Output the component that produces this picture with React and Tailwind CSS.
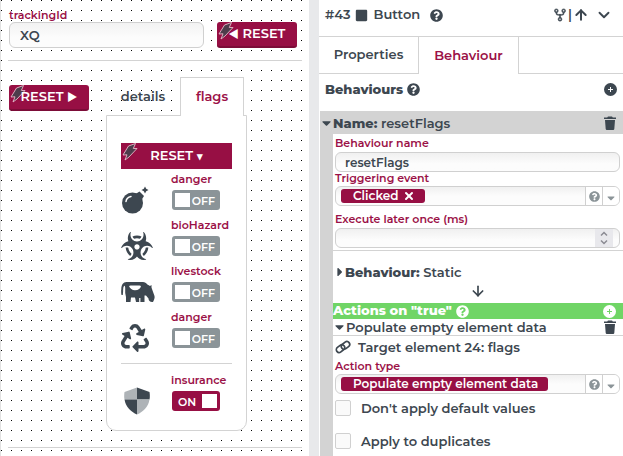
import { useState } from "react";
import {
  FaBiohazard,
  FaRecycle,
  FaCaretDown,
  FaCaretRight,
  FaQuestionCircle,
  FaSquare,
} from "react-icons/fa";
import { GoRepoForked } from "react-icons/go";
import { ChevronDown, ArrowUp, ArrowDown, X } from "lucide-react";

// ICONS
function BoltIcon() {
  return (
    <svg viewBox="0 0 18 18" className="absolute left-0 top-0 h-[18px] w-[18px]" aria-hidden="true">
      <path
        d="M7.500 3 L14.500 .5 L12.300 5.500 L16 5.500 L8 14 L4 17 L6 11.800 L2 12 Z"
        fill="#4d3c4b"
        stroke="#e7b9c9"
        strokeWidth=".9"
        strokeLinejoin="round"
      />
    </svg>
  );
}

function BombIcon() {
  return (
    <svg viewBox="0 0 28 28" className="h-7 w-7" fill="currentColor" aria-hidden="true">
      <circle cx="11.500" cy="17" r="10.500" />
      <path d="M14.500 8 L18.500 5.500 L23 10 L20.500 14 Z" />
      <path d="M24 .5 L25.200 2.800 L27.500 4 L25.200 5.200 L24 7.500 L22.800 5.200 L20.500 4 L22.800 2.800 Z" />
      <path d="M5 15.500 Q5.500 11.500 10 10.500" fill="none" stroke="#fff" strokeWidth="1.500" strokeLinecap="round" />
    </svg>
  );
}

function CowIcon() {
  return (
    <svg viewBox="0 0 34 22" className="h-[22px] w-[34px]" fill="currentColor" aria-hidden="true">
      <path
        fillRule="evenodd"
        d="M.5 14 C0 12 .2 10 .3 8 C.4 4 2 1 5.500 1 H22 C24 1 25 2 26 3.200 L29 5 L30.500 4 V6.500 L31 8 L33.500 15 C34 17 33 19 32 21 C29.500 21.500 27.500 20 27.500 17.500 L25 14.500 H23.500 V21 H15 L14 16.500 H10 L9.500 21 H5 V16 L4.200 12 V7 C4.200 5.500 3.500 4.500 3 5 C1.700 6.500 2.500 10 1.800 14 Z M8 5 C9 7.500 11 9.200 14 9.200 C17.500 9.200 19.500 7.500 20 5 L18.500 4.500 H9.500 Z"
      />
      <path d="M18.800 17 V21.500" stroke="#fff" strokeWidth="1.200" />
    </svg>
  );
}

function ShieldIcon() {
  return (
    <svg viewBox="0 0 26 28" className="ml-[3px] h-7 w-[26px]" aria-hidden="true">
      <path d="M13 .5 L.5 5 C0 8 .1 10.500 .5 12.500 H13 Z" fill="#aeb3b7" />
      <path d="M13 .5 L25.500 5 C26 8 25.900 10.500 25.500 12.500 H13 Z" fill="#3d4750" />
      <path d="M.5 12.500 H13 V27.500 C7 25 1.500 19.500 .5 12.500 Z" fill="#3d4750" />
      <path d="M25.500 12.500 H13 V27.500 C19 25 24.500 19.500 25.500 12.500 Z" fill="#aeb3b7" />
    </svg>
  );
}

function TrashIcon() {
  return (
    <svg viewBox="0 0 14 14" className="h-3.5 w-3.5" fill="currentColor" aria-hidden="true">
      <path d="M1 1.500 H4.200 L5 .4 H9 L9.800 1.500 H13 V3 H1 Z M2 4 H12 L11.300 13 Q11.200 14 10.200 14 H3.800 Q2.800 14 2.700 13 Z" />
    </svg>
  );
}

function PlusIcon({ plusClass }) {
  return (
    <svg viewBox="0 0 13 13" className="h-[13px] w-[13px]" aria-hidden="true">
      <circle cx="6.500" cy="6.500" r="6.500" fill="currentColor" />
      <path d="M6.500 4 V9 M4 6.500 H9" className={plusClass} strokeWidth="1" />
    </svg>
  );
}

function ChainIcon() {
  return (
    <svg viewBox="0 0 16 14" className="h-3.5 w-4" fill="none" stroke="currentColor" strokeWidth="1.700" aria-hidden="true">
      <rect x="1" y="5.800" width="9" height="5.600" rx="2.800" transform="rotate(-38 5.500 8.600)" />
      <rect x="6" y="2.600" width="9" height="5.600" rx="2.800" transform="rotate(-38 10.500 5.400)" />
    </svg>
  );
}

function StepIcon({ d }) {
  return (
    <svg viewBox="0 0 8 6" className="h-1.5 w-2" fill="none" stroke="currentColor" strokeWidth="1.500" aria-hidden="true">
      <path d={d} />
    </svg>
  );
}

const FLAGS = [
  { id: "danger", label: "danger", icon: <BombIcon /> },
  { id: "bioHazard", label: "bioHazard", icon: <FaBiohazard className="h-7 w-8" /> },
  { id: "livestock", label: "livestock", icon: <CowIcon /> },
  { id: "recycle", label: "danger", icon: <FaRecycle className="h-7 w-7" /> },
];

// One labelled switch with its picture on the left
function FlagRow({ id, label, icon, defaultChecked = false }) {
  const [on, setOn] = useState(defaultChecked);

  return (
    <div className="flex h-[46px]">
      <div className="flex w-[50px] items-center pt-2">{icon}</div>
      <label htmlFor={id} className="block text-[#9b1147]">
        <span className="block h-[17px] text-[11px] leading-3">{label}</span>
        <input
          id={id}
          type="checkbox"
          role="switch"
          className="peer sr-only"
          checked={on}
          onChange={(e) => setOn(e.target.checked)}
        />
        <span
          className={`ml-px flex h-5 w-12 cursor-pointer items-center justify-between rounded-[3px] text-[11px] text-white ${
            on ? "flex-row-reverse bg-[#970f44] pr-[3px] pl-1.5" : "bg-[#8b9498] pr-[5px] pl-[3px]"
          }`}
        >
          <span className="h-3.5 w-[15px] bg-white" />
          <span className="pt-0.5">{on ? "ON" : "OFF"}</span>
        </span>
      </label>
    </div>
  );
}

function ResetButton({ children, className = "" }) {
  return (
    <button
      type="button"
      className={`relative h-[26px] bg-[#970f44] text-[13px] text-white ${className}`}
    >
      <BoltIcon />
      <span className="relative">{children}</span>
    </button>
  );
}

// Chip field with a help button and a drop-down arrow
function ChipSelect({ id, value, removable = false }) {
  return (
    <div className="flex h-5 overflow-hidden rounded-md border border-[#d0d0d0] bg-linear-to-b from-[#f0f0f0] to-[#fcfcfc] to-50%">
      <div className="flex flex-1 items-center pl-[5px]">
        <span className="flex h-3.5 items-center gap-1 rounded-[3px] bg-[#970f44] pr-2.5 pl-3 text-[12px] text-white">
          {value}
          {removable && (
            <button type="button" aria-label="Remove">
              <X className="h-3 w-3" strokeWidth={4} />
            </button>
          )}
        </span>
      </div>
      <button
        type="button"
        aria-label="Help"
        className="flex w-[17px] items-center justify-center border-l border-[#d0d0d0] bg-white text-[#8b9498]"
      >
        <FaQuestionCircle className="h-[11px] w-[11px]" />
      </button>
      <div className="relative flex w-[17px] items-center justify-center border-l border-[#d0d0d0] bg-white pt-1 text-[#8b9498]">
        <FaCaretDown className="h-3 w-3" />
        <select id={id} defaultValue={value} className="absolute inset-0 opacity-0">
          <option>{value}</option>
        </select>
      </div>
    </div>
  );
}

function CheckRow({ id, label }) {
  return (
    <label htmlFor={id} className="flex h-[33px] items-start gap-2.5 text-[13px] leading-4">
      <input
        id={id}
        type="checkbox"
        className="h-4 w-4 appearance-none rounded-xs border border-[#d0d0d0] bg-[#fafafa] checked:bg-[#970f44]"
      />
      {label}
    </label>
  );
}

// ------------------------------------------------------------------
// LEFT: form canvas
// ------------------------------------------------------------------
function Canvas() {
  return (
    <main className="border-l border-[#e2e2e2] bg-[conic-gradient(from_270deg_at_1px_1px,#000_90deg,transparent_0)] bg-size-[10px_10px] pr-[7px] pl-[7px]">
      <div className="flex items-end gap-[13px] border-b border-[#d3d3d3] pt-2 pr-[5px] pb-3 pl-px">
        <div className="flex-1">
          <label htmlFor="trackingId" className="block w-fit text-[11px] leading-[14px] text-[#9b1147]">
            trackingId
          </label>
          <input
            id="trackingId"
            defaultValue="XQ"
            className="block h-[26px] w-full rounded-md border border-[#d0d0d0] bg-linear-to-b from-[#f2f2f2] to-[#fcfcfc] to-60% px-2.5 text-[13px]"
          />
        </div>
        <ResetButton className="w-20 rounded-[3px] border-b-2 border-[#7c0c38]">
          <span className="text-[11px]">◄</span> RESET
        </ResetButton>
      </div>

      <div className="flex items-start gap-[17px] border-b border-[#d3d3d3] px-px pt-4 pb-4">
        <ResetButton className="mt-2 w-20 rounded-[3px] border-b-2 border-[#7c0c38]">
          RESET <span className="text-[11px]">►</span>
        </ResetButton>

        <div>
          <div role="tablist" className="relative z-10 -mb-px flex h-[39px] text-[13px]">
            <button type="button" role="tab" className="w-[74px]">
              details
            </button>
            <button
              type="button"
              role="tab"
              aria-selected="true"
              className="w-16 border border-b-0 border-[#d3d3d3] bg-white text-[#9b1147]"
            >
              flags
            </button>
          </div>
          <div className="w-[141px] rounded-b-[10px] border border-[#d3d3d3] bg-white px-3.5 pt-[27px]">
            <ResetButton className="mb-1 w-full">
              RESET <span className="text-[11px]">▾</span>
            </ResetButton>
            {FLAGS.map((flag) => (
              <FlagRow key={flag.id} {...flag} />
            ))}
            <div className="mt-1.5 border-t border-[#d3d3d3] pt-2.5 pb-2.5">
              <FlagRow id="insurance" label="insurance" icon={<ShieldIcon />} defaultChecked />
            </div>
          </div>
        </div>
      </div>
    </main>
  );
}

// ------------------------------------------------------------------
// RIGHT: element inspector
// ------------------------------------------------------------------
function Inspector() {
  return (
    <aside className="min-w-0 bg-white">
      <header className="flex h-[37px] items-center border-b border-[#d3d3d3] pr-2.5 pb-1.5 pl-1.5 text-[13px]">
        <span>#43</span>
        <FaSquare className="mr-1.5 ml-1 h-[13px] w-[13px]" />
        <span>Button</span>
        <button type="button" aria-label="Help" className="ml-2.5">
          <FaQuestionCircle className="h-[13px] w-[13px]" />
        </button>
        <div className="ml-auto flex items-center">
          <GoRepoForked className="h-3.5 w-3.5" strokeWidth={1} />
          <span className="w-1.5 text-center">|</span>
          <ArrowUp className="h-4 w-4" strokeWidth={3} />
          <button type="button" aria-label="Collapse" className="ml-1.5">
            <ChevronDown className="h-[18px] w-[18px]" strokeWidth={2.5} />
          </button>
        </div>
      </header>

      <div role="tablist" className="flex h-[37px] text-[13px]">
        <button type="button" role="tab" className="w-[100px] border-r border-b border-[#d3d3d3]">
          Properties
        </button>
        <button
          type="button"
          role="tab"
          aria-selected="true"
          className="w-[100px] border-r border-[#d3d3d3] text-[#9b1147]"
        >
          Behaviour
        </button>
        <div className="flex-1 border-b border-[#d3d3d3]" />
      </div>

      <div className="flex h-[37px] items-center gap-1 pr-1.5 pb-1.5 pl-1.5">
        <h2 className="text-[13px] font-extrabold">Behaviours</h2>
        <FaQuestionCircle className="h-[13px] w-[13px]" />
        <button type="button" aria-label="Add behaviour" className="ml-auto">
          <PlusIcon plusClass="stroke-white" />
        </button>
      </div>

      <section className="ml-px bg-[#d3d3d3]">
        <div className="flex h-[23px] items-center pr-1.5 text-[13px]">
          <FaCaretDown className="h-3.5 w-[13px]" />
          <span className="pt-0.5">
            <b className="font-extrabold">Name:</b> resetFlags
          </span>
          <button type="button" aria-label="Delete behaviour" className="ml-auto">
            <TrashIcon />
          </button>
        </div>

        <div className="ml-[13px] bg-white">
          <div className="border-b border-[#d3d3d3] pt-0.5 pr-[3px] pb-0.5 pl-0.5">
            <label htmlFor="behaviourName" className="block pb-0.5 text-[11px] leading-[14px] text-[#9b1147]">
              Behaviour name
            </label>
            <input
              id="behaviourName"
              defaultValue="resetFlags"
              className="block h-5 w-full rounded-md border border-[#d0d0d0] bg-linear-to-b from-[#f0f0f0] to-[#fcfcfc] to-60% px-[9px] text-[12px]"
            />
            <label htmlFor="trigger" className="block pb-0.5 text-[11px] leading-3 text-[#9b1147]">
              Triggering event
            </label>
            <ChipSelect id="trigger" value="Clicked" removable />
            <label htmlFor="delay" className="block pt-1.5 pb-0.5 text-[11px] leading-[14px] text-[#9b1147]">
              Execute later once (ms)
            </label>
            <div className="flex h-5 overflow-hidden rounded-md border border-[#d0d0d0] bg-linear-to-b from-[#f0f0f0] to-[#fcfcfc] to-60% pr-1.5">
              <input
                id="delay"
                type="number"
                className="min-w-0 flex-1 bg-transparent px-2.5 text-[12px] [appearance:textfield]"
              />
              <div className="flex w-[18px] flex-col items-center justify-center gap-0.5 bg-[#e8e8ec] text-[#8b8b93]">
                <button type="button" aria-label="Increase">
                  <StepIcon d="M1 4.500 L4 1.500 L7 4.500" />
                </button>
                <button type="button" aria-label="Decrease">
                  <StepIcon d="M1 1.500 L4 4.500 L7 1.500" />
                </button>
              </div>
            </div>
          </div>

          <div className="flex items-center pt-3 pb-0.5 pl-0.5 text-[13px] leading-[18px]">
            <FaCaretRight className="h-3.5 w-2.5" />
            <span>
              <b className="font-extrabold">Behaviour:</b> Static
            </span>
          </div>
          <div className="flex h-5 items-start justify-center">
            <ArrowDown className="h-4 w-4" strokeWidth={2.5} />
          </div>

          <div className="flex h-4 items-center gap-1 bg-[#70d566] pr-[7px] text-[13px] text-white">
            <h3 className="font-extrabold">Actions on "true"</h3>
            <FaQuestionCircle className="h-[13px] w-[13px]" />
            <button type="button" aria-label="Add action" className="ml-auto">
              <PlusIcon plusClass="stroke-[#70d566]" />
            </button>
          </div>
          <div className="flex h-[17px] items-center border-b border-[#d3d3d3] pr-1.5 text-[13px]">
            <FaCaretDown className="h-3.5 w-[13px]" />
            <span className="pt-px">Populate empty element data</span>
            <button type="button" aria-label="Delete action" className="ml-auto">
              <TrashIcon />
            </button>
          </div>

          <div className="pt-0.5 pr-[3px] pl-0.5">
            <a href="#flags" className="flex items-center gap-[7px] pb-0.5 text-[13px] leading-[18px]">
              <ChainIcon />
              Target element 24: flags
            </a>
            <label htmlFor="actionType" className="block text-[11px] leading-4 text-[#9b1147]">
              Action type
            </label>
            <ChipSelect id="actionType" value="Populate empty element data" />
            <div className="pt-1.5">
              <CheckRow id="noDefaults" label="Don't apply default values" />
              <CheckRow id="duplicates" label="Apply to duplicates" />
            </div>
          </div>
        </div>
      </section>
    </aside>
  );
}

export default function App() {
  return (
    <div className="grid min-h-screen grid-cols-[309fr_10px_304fr] bg-white font-['Montserrat','Inter',sans-serif] font-semibold text-[#3d4750]">
      <Canvas />
      <div className="bg-[#e8e9eb]" />
      <Inspector />
    </div>
  );
}
